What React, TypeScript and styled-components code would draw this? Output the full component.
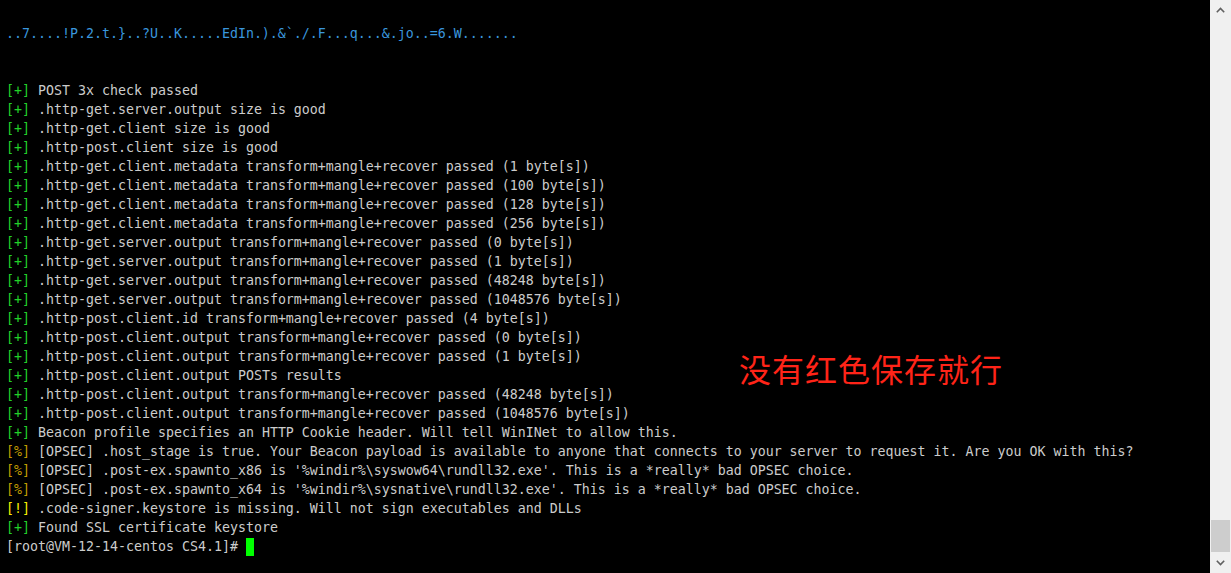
import React from "react";
import styled, { createGlobalStyle } from "styled-components";

const Global = createGlobalStyle`
  html, body { margin: 0; padding: 0; background: #000; height: 100%; overflow: hidden; }
  #root { height: 100%; }
`;

const Window = styled.div`
  position: relative;
  display: flex;
  width: 1231px;
  height: 573px;
  background: #000;
  overflow: hidden;
`;

const Terminal = styled.div`
  flex: 1;
  padding: 24px 0 0 6px;
  font-family: "DejaVu Sans Mono", "Liberation Mono", monospace;
  font-size: 13.29px;
  line-height: 19px;
  color: #cccccc;
  white-space: pre;
`;

const Line = styled.div<{ $color?: string }>`
  height: 19px;
  color: ${(p) => p.$color || "#cccccc"};
`;

const Tag = styled.span<{ $color: string }>`
  color: ${(p) => p.$color};
`;

const Cursor = styled.span`
  display: inline-block;
  width: 8px;
  height: 18px;
  background: #00ff00;
  vertical-align: -5px;
`;

const Scrollbar = styled.div`
  width: 21px;
  background: #f0f0f0;
  display: flex;
  flex-direction: column;
  align-items: center;
`;

const Arrow = styled.div`
  height: 20px;
  width: 100%;
  display: flex;
  align-items: center;
  justify-content: center;
`;

const Track = styled.div`
  flex: 1;
  width: 100%;
  display: flex;
  flex-direction: column;
  justify-content: flex-end;
  padding-bottom: 1px;
`;

const Thumb = styled.div`
  height: 32px;
  margin: 0 1px;
  background: #cdcdcd;
`;

const Note = styled.div`
  position: absolute;
  left: 739px;
  top: 348px;
  font-family: "Noto Sans CJK SC", sans-serif;
  font-size: 32px;
  line-height: 40px;
  color: #ff2418;
  letter-spacing: 1px;
`;

const GREEN = "#22d12a";
const DYEL = "#c19c00";
const YEL = "#f9f100";

type L = { tag?: string; color?: string; text: string };

const BLUE_LINE = "..7....!P.2.t.}..?U..K.....EdIn.).&`./.F...q...&.jo..=6.W.......";

const lines: L[] = [
  { tag: "[+]", color: GREEN, text: " POST 3x check passed" },
  { tag: "[+]", color: GREEN, text: " .http-get.server.output size is good" },
  { tag: "[+]", color: GREEN, text: " .http-get.client size is good" },
  { tag: "[+]", color: GREEN, text: " .http-post.client size is good" },
  { tag: "[+]", color: GREEN, text: " .http-get.client.metadata transform+mangle+recover passed (1 byte[s])" },
  { tag: "[+]", color: GREEN, text: " .http-get.client.metadata transform+mangle+recover passed (100 byte[s])" },
  { tag: "[+]", color: GREEN, text: " .http-get.client.metadata transform+mangle+recover passed (128 byte[s])" },
  { tag: "[+]", color: GREEN, text: " .http-get.client.metadata transform+mangle+recover passed (256 byte[s])" },
  { tag: "[+]", color: GREEN, text: " .http-get.server.output transform+mangle+recover passed (0 byte[s])" },
  { tag: "[+]", color: GREEN, text: " .http-get.server.output transform+mangle+recover passed (1 byte[s])" },
  { tag: "[+]", color: GREEN, text: " .http-get.server.output transform+mangle+recover passed (48248 byte[s])" },
  { tag: "[+]", color: GREEN, text: " .http-get.server.output transform+mangle+recover passed (1048576 byte[s])" },
  { tag: "[+]", color: GREEN, text: " .http-post.client.id transform+mangle+recover passed (4 byte[s])" },
  { tag: "[+]", color: GREEN, text: " .http-post.client.output transform+mangle+recover passed (0 byte[s])" },
  { tag: "[+]", color: GREEN, text: " .http-post.client.output transform+mangle+recover passed (1 byte[s])" },
  { tag: "[+]", color: GREEN, text: " .http-post.client.output POSTs results" },
  { tag: "[+]", color: GREEN, text: " .http-post.client.output transform+mangle+recover passed (48248 byte[s])" },
  { tag: "[+]", color: GREEN, text: " .http-post.client.output transform+mangle+recover passed (1048576 byte[s])" },
  { tag: "[+]", color: GREEN, text: " Beacon profile specifies an HTTP Cookie header. Will tell WinINet to allow this." },
  { tag: "[%]", color: DYEL, text: " [OPSEC] .host_stage is true. Your Beacon payload is available to anyone that connects to your server to request it. Are you OK with this?" },
  { tag: "[%]", color: DYEL, text: " [OPSEC] .post-ex.spawnto_x86 is '%windir%\\syswow64\\rundll32.exe'. This is a *really* bad OPSEC choice." },
  { tag: "[%]", color: DYEL, text: " [OPSEC] .post-ex.spawnto_x64 is '%windir%\\sysnative\\rundll32.exe'. This is a *really* bad OPSEC choice." },
  { tag: "[!]", color: YEL, text: " .code-signer.keystore is missing. Will not sign executables and DLLs" },
  { tag: "[+]", color: GREEN, text: " Found SSL certificate keystore" },
];

const Chevron = ({ up }: { up?: boolean }) => (
  <svg width="9" height="6" viewBox="0 0 9 6">
    <path
      d={up ? "M0.8 5.2 L4.5 1.5 L8.2 5.2" : "M0.8 0.8 L4.5 4.5 L8.2 0.8"}
      fill="none"
      stroke="#606060"
      strokeWidth="1.6"
    />
  </svg>
);

export default function App() {
  return (
    <>
      <Global />
      <Window>
        <Terminal>
          <Line $color="#3a96dd">{BLUE_LINE}</Line>
          <Line />
          <Line />
          {lines.map((l, i) => (
            <Line key={i}>
              {l.tag && <Tag $color={l.color!}>{l.tag}</Tag>}
              {l.text}
            </Line>
          ))}
          <Line>
            {"[root@VM-12-14-centos CS4.1]# "}
            <Cursor />
          </Line>
        </Terminal>
        <Scrollbar>
          <Arrow>
            <Chevron up />
          </Arrow>
          <Track>
            <Thumb />
          </Track>
          <Arrow>
            <Chevron />
          </Arrow>
        </Scrollbar>
        <Note>没有红色保存就行</Note>
      </Window>
    </>
  );
}
